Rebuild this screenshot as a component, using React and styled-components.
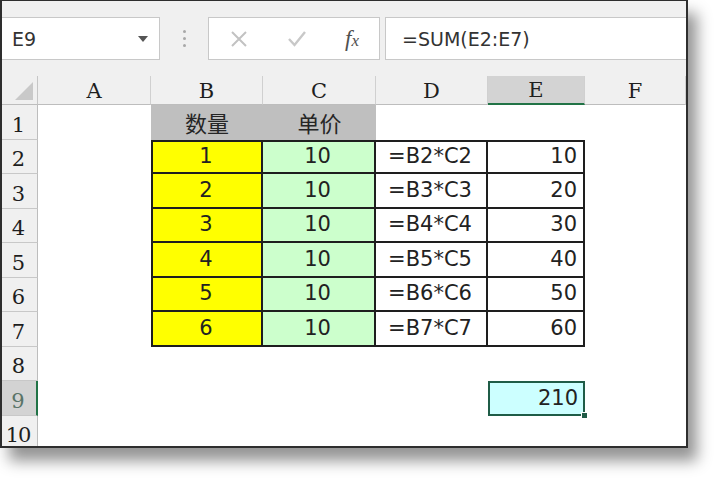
import React from "react";
import styled, { createGlobalStyle } from "styled-components";

const GlobalStyle = createGlobalStyle`
  * { box-sizing: border-box; }
  body {
    margin: 0;
    background: #ffffff;
    font-family: "DejaVu Sans", "Noto Sans CJK SC", sans-serif;
  }
`;

const rows = [
  { n: 1, price: 10 },
  { n: 2, price: 10 },
  { n: 3, price: 10 },
  { n: 4, price: 10 },
  { n: 5, price: 10 },
  { n: 6, price: 10 },
];

const columns = ["A", "B", "C", "D", "E", "F"];

export default function App() {
  return (
    <Page>
      <GlobalStyle />
      <Frame>
        <Toolbar>
          <NameBox>
            <span>E9</span>
            <DropArrow />
          </NameBox>
          <Grip>
            <i />
            <i />
            <i />
          </Grip>
          <ActionBox>
            <svg width="18" height="18" viewBox="0 0 18 18">
              <path d="M2 2 L16 16 M16 2 L2 16" stroke="#c2c2c2" strokeWidth="2" fill="none" />
            </svg>
            <svg width="20" height="18" viewBox="0 0 20 18">
              <path d="M2 9 L7.5 15 L18 2" stroke="#c8c8c8" strokeWidth="2.4" fill="none" />
            </svg>
            <Fx>
              f<small>x</small>
            </Fx>
          </ActionBox>
          <FormulaInput>=SUM(E2:E7)</FormulaInput>
        </Toolbar>

        <Sheet>
          <Corner>
            <svg width="18" height="18" viewBox="0 0 18 18">
              <polygon points="18,0 18,18 0,18" fill="#c9c9c9" />
            </svg>
          </Corner>
          {columns.map((c) => (
            <ColHead key={c} $active={c === "E"}>
              {c}
            </ColHead>
          ))}

          {Array.from({ length: 10 }, (_, i) => (
            <RowHead key={i} style={{ gridRow: i + 2 }} $active={i + 1 === 9}>
              {i + 1}
            </RowHead>
          ))}

          <TitleCell $col={3}>数量</TitleCell>
          <TitleCell $col={4}>单价</TitleCell>

          <DataBlock>
            {rows.map((r, i) => (
              <React.Fragment key={r.n}>
                <DataCell $fill="#ffff00" $align="center">{r.n}</DataCell>
                <DataCell $fill="#ccffcc" $align="center">{r.price}</DataCell>
                <DataCell $fill="#ffffff" $align="center">{`=B${i + 2}*C${i + 2}`}</DataCell>
                <DataCell $fill="#ffffff" $align="flex-end">{r.n * r.price}</DataCell>
              </React.Fragment>
            ))}
          </DataBlock>

          <SumCell>
            210
            <FillHandle />
          </SumCell>
        </Sheet>
      </Frame>
    </Page>
  );
}

const Page = styled.div`
  min-height: 481px;
  padding-bottom: 20px;
`;

const Frame = styled.div`
  width: 688px;
  height: 448px;
  border: 2px solid #2e2e2e;
  border-top-width: 1px;
  background: #ffffff;
  overflow: hidden;
  box-shadow: 9px 13px 14px rgba(0, 0, 0, 0.42);
  display: flex;
  flex-direction: column;
`;

const Toolbar = styled.div`
  height: 75px;
  flex: none;
  display: flex;
  align-items: flex-start;
  padding-top: 16px;
  background: #f0f0f0;
`;

const NameBox = styled.div`
  width: 158px;
  height: 43px;
  background: #ffffff;
  border: 1px solid #c8c8c8;
  border-left: none;
  display: flex;
  align-items: center;
  justify-content: space-between;
  padding: 0 11px 0 10px;
  font-size: 19px;
  color: #333;
`;

const DropArrow = styled.div`
  width: 0;
  height: 0;
  border-left: 5px solid transparent;
  border-right: 5px solid transparent;
  border-top: 6px solid #555;
`;

const Grip = styled.div`
  width: 48px;
  height: 43px;
  display: flex;
  flex-direction: column;
  align-items: center;
  justify-content: center;
  gap: 4px;

  i {
    width: 3px;
    height: 3px;
    border-radius: 50%;
    background: #a8a8a8;
  }
`;

const ActionBox = styled.div`
  width: 172px;
  height: 43px;
  background: #ffffff;
  border: 1px solid #c8c8c8;
  display: flex;
  align-items: center;
  justify-content: space-between;
  padding: 0 20px 0 21px;
`;

const Fx = styled.span`
  font-family: "Liberation Serif", serif;
  font-style: italic;
  font-size: 23px;
  color: #505050;
  line-height: 1;

  small {
    font-size: 17px;
  }
`;

const FormulaInput = styled.div`
  flex: 1;
  margin-left: 5px;
  height: 43px;
  background: #ffffff;
  border: 1px solid #c8c8c8;
  border-right: none;
  display: flex;
  align-items: center;
  padding-left: 16px;
  font-size: 19px;
  color: #333;
`;

const Sheet = styled.div`
  flex: 1;
  display: grid;
  grid-template-columns: 36px 113px 112px 113px 112px 97px 1fr;
  grid-template-rows: 29px repeat(10, 34.5px);
  font-family: "DejaVu Sans", "Noto Sans CJK SC", sans-serif;
  font-size: 21px;
  color: #222;
`;

const Corner = styled.div`
  grid-column: 1;
  grid-row: 1;
  background: #f0f0f0;
  border-right: 1px solid #c6c6c6;
  border-bottom: 1px solid #bdbdbd;
  display: flex;
  align-items: flex-end;
  justify-content: flex-end;
  padding: 0 4px 4px 0;
`;

const ColHead = styled.div`
  grid-row: 1;
  background: ${(p) => (p.$active ? "#d3d3d3" : "#f0f0f0")};
  border-right: 1px solid #d0d0d0;
  border-bottom: ${(p) => (p.$active ? "2px solid #217346" : "1px solid #bdbdbd")};
  display: flex;
  align-items: flex-end;
  justify-content: center;
  padding-bottom: 2px;
  font-family: "DejaVu Serif", serif;
  font-size: 21px;
  line-height: 1;
  color: #1e1e1e;
`;

const RowHead = styled.div`
  grid-column: 1;
  background: ${(p) => (p.$active ? "#d3d3d3" : "#f0f0f0")};
  border-bottom: 1px solid #c8c8c8;
  border-right: ${(p) => (p.$active ? "2px solid #217346" : "1px solid #bdbdbd")};
  display: flex;
  align-items: flex-end;
  justify-content: center;
  padding: 0 3px 3px 0;
  font-family: "DejaVu Serif", serif;
  font-size: 21px;
  line-height: 1;
  letter-spacing: -1px;
  color: ${(p) => (p.$active ? "#5a7468" : "#1e1e1e")};
`;

const TitleCell = styled.div`
  grid-column: ${(p) => p.$col};
  grid-row: 2;
  background: #bfbfbf;
  display: flex;
  align-items: center;
  justify-content: center;
  font-family: "Noto Sans CJK SC", sans-serif;
  font-size: 22px;
  color: #262626;
`;

const DataBlock = styled.div`
  grid-column: 3 / 7;
  grid-row: 3 / 9;
  display: grid;
  grid-template-columns: 110px 113px 112px 97px;
  grid-template-rows: 32.5px repeat(5, 34.5px);
  border-left: 2px solid #1e1e1e;
  border-top: 2px solid #1e1e1e;
`;

const DataCell = styled.div`
  background: ${(p) => p.$fill};
  border-right: 2px solid #1e1e1e;
  border-bottom: 2px solid #1e1e1e;
  display: flex;
  align-items: center;
  justify-content: ${(p) => p.$align};
  padding: 0 6px 0 4px;
  line-height: 1;
`;

const SumCell = styled.div`
  grid-column: 6;
  grid-row: 10;
  position: relative;
  background: #ccffff;
  border: 2px solid #1f5c47;
  display: flex;
  align-items: center;
  justify-content: flex-end;
  padding-right: 5px;
  line-height: 1;
`;

const FillHandle = styled.div`
  position: absolute;
  right: -5px;
  bottom: -5px;
  width: 7px;
  height: 7px;
  background: #1f5c47;
  border: 1px solid #ffffff;
`;
